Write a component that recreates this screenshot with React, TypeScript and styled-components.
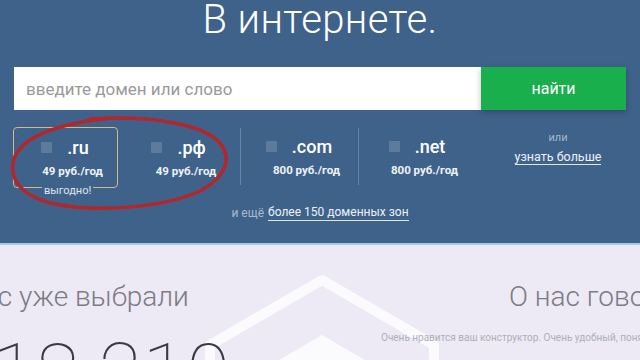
import React from 'react';
import styled, {createGlobalStyle} from 'styled-components';

const GlobalStyle = createGlobalStyle`
  html, body {
    margin: 0;
    padding: 0;
    width: 640px;
    height: 360px;
    overflow: hidden;
    background: #edeaf5;
    font-family: Roboto, 'Noto Sans', sans-serif;
  }
`;

interface IDomain {
  name: string;
  price: string;
  width: number;
  best?: boolean;
  divider?: boolean;
}

const DOMAINS: IDomain[] = [
  {name: '.ru', price: '49 руб./год', width: 105, best: true},
  {name: '.рф', price: '49 руб./год', width: 122},
  {name: '.com', price: '800 руб./год', width: 118, divider: true},
  {name: '.net', price: '800 руб./год', width: 118, divider: true}
];

const Hero = styled.section`
  position: relative;
  height: 243px;
  background: #3f628b;
  border-bottom: 2px solid #a9c7e6;
  display: flex;
  flex-direction: column;
  align-items: center;
`;

const Title = styled.h1`
  margin: 0;
  font-size: 40px;
  line-height: 40px;
  font-weight: 300;
  color: #fff;
  letter-spacing: 0.4px;
`;

const SearchBar = styled.form`
  margin-top: 27px;
  align-self: stretch;
  padding: 0 14px;
  display: flex;
  height: 43px;
`;

const SearchInput = styled.input`
  box-sizing: border-box;
  width: 467px;
  border: none;
  outline: none;
  padding: 0 12px;
  font-family: inherit;
  font-size: 17px;
  color: #333;
  background: #fff;
  &::placeholder {
    color: #9a9a9a;
  }
`;

const SearchButton = styled.button`
  width: 145px;
  border: none;
  background: #19af4c;
  color: #fff;
  font-family: inherit;
  font-size: 16px;
  box-shadow: 0 2px 6px rgba(0, 0, 0, 0.25);
`;

const DomainRow = styled.div`
  margin-top: 17px;
  align-self: stretch;
  padding-left: 13px;
  display: flex;
  height: 61px;
`;

const DomainCell = styled.label<{$width: number; $best?: boolean; $divider?: boolean}>`
  position: relative;
  box-sizing: border-box;
  width: ${(p) => p.$width}px;
  padding-left: 14px;
  display: flex;
  flex-direction: column;
  align-items: center;
  justify-content: center;
  gap: 6px;
  border: ${(p) => (p.$best ? '1.5px solid #d2b985' : 'none')};
  border-left: ${(p) => (p.$divider ? '1px solid #6685a9' : p.$best ? '1.5px solid #d2b985' : 'none')};
  border-radius: ${(p) => (p.$divider ? '0' : '4px')};
  ${(p) => (p.$divider ? 'margin: 1px 0 3px;' : '')}
`;

const NameLine = styled.div`
  display: flex;
  align-items: center;
  gap: 15px;
  margin-right: 15px;
`;

const Check = styled.span`
  width: 11px;
  height: 11px;
  border-radius: 1px;
  background: rgba(255, 255, 255, 0.16);
`;

const DomainName = styled.span`
  font-size: 18px;
  line-height: 20px;
  font-weight: 500;
  color: #fff;
`;

const Price = styled.span`
  font-size: 11.5px;
  font-weight: 700;
  color: #f1f3f6;
`;

const Badge = styled.span`
  position: absolute;
  left: 28px;
  bottom: -10px;
  padding: 0 2px;
  background: #3f628b;
  font-size: 11px;
  line-height: 13px;
  color: #dfe5ec;
`;

const MoreCell = styled.div`
  flex: 1;
  display: flex;
  flex-direction: column;
  align-items: center;
  padding-top: 4px;
  gap: 5px;
`;

const Muted = styled.span`
  font-size: 11px;
  color: #a6b8cd;
`;

const Link = styled.a<{$size?: number}>`
  font-size: ${(p) => p.$size || 12}px;
  color: #eef2f7;
  text-decoration: none;
  border-bottom: 1px solid #dfe6ee;
  line-height: 15px;
`;

const Zones = styled.div`
  margin-top: 17px;
  font-size: 12px;
  line-height: 16px;
  color: #a8bacf;
  display: flex;
  gap: 4px;
`;

const Circle = styled.svg`
  position: absolute;
  left: 0;
  top: 0;
  pointer-events: none;
`;

const Lower = styled.section`
  position: relative;
  height: 115px;
  overflow: hidden;
  display: flex;
  padding-top: 35px;
`;

const Emblem = styled.svg`
  position: absolute;
  left: 182px;
  top: 28px;
`;

const LeftCol = styled.div`
  position: relative;
  width: 418px;
  margin-left: -37px;
  flex-shrink: 0;
  white-space: nowrap;
`;

const RightCol = styled.div`
  position: relative;
  flex: 1;
  white-space: nowrap;
`;

const Heading = styled.h2<{$indent?: number}>`
  margin: 0 0 0 ${(p) => p.$indent || 0}px;
  font-size: 28px;
  line-height: 34px;
  font-weight: 300;
  color: #7b7b85;
`;

const Counter = styled.div`
  margin: 19px 0 0 29px;
  font-size: 80px;
  line-height: 80px;
  font-weight: 100;
  color: #3a3a44;
`;

const Quote = styled.p`
  margin: 18px 0 0;
  font-size: 10px;
  color: #aeaeb8;
`;

const App = () => {
  return (
    <>
      <GlobalStyle />
      <Hero>
        <Title>В интернете.</Title>
        <SearchBar>
          <SearchInput placeholder="введите домен или слово" />
          <SearchButton type="button">найти</SearchButton>
        </SearchBar>
        <DomainRow>
          {DOMAINS.map((d) => (
            <DomainCell key={d.name} $width={d.width} $best={d.best} $divider={d.divider}>
              <NameLine>
                <Check />
                <DomainName>{d.name}</DomainName>
              </NameLine>
              <Price>{d.price}</Price>
              {d.best && <Badge>выгодно!</Badge>}
            </DomainCell>
          ))}
          <MoreCell>
            <Muted>или</Muted>
            <Link $size={12.5}>узнать больше</Link>
          </MoreCell>
        </DomainRow>
        <Zones>
          <span>и ещё</span>
          <Link>более 150 доменных зон</Link>
        </Zones>
        <Circle width="240" height="220" viewBox="0 0 240 220">
          <path
            d="M 90 119 C 150 115, 202 124, 219 142 C 233 158, 226 177, 200 191 C 165 207, 100 213, 55 204 C 22 197, 8 179, 14 159 C 20 140, 50 124, 112 118"
            fill="none"
            stroke="#b3262a"
            strokeWidth="3.5"
            strokeLinecap="round"
          />
        </Circle>
      </Hero>
      <Lower>
        <Emblem width="280" height="100" viewBox="0 0 280 100">
          <path
            d="M 140 7 L 252 72 L 252 200 L 140 265 L 28 200 L 28 72 Z"
            fill="none"
            stroke="#fbfbfe"
            strokeWidth="10"
            strokeLinejoin="round"
          />
          <path d="M 140 62 L 205 100 L 75 100 Z" fill="#fbfbfe" />
        </Emblem>
        <LeftCol>
          <Heading>Нас уже выбрали</Heading>
          <Counter>18 210</Counter>
        </LeftCol>
        <RightCol>
          <Heading $indent={128}>О нас говорят</Heading>
          <Quote>Очень нравится ваш конструктор. Очень удобный, понятный и красивый.</Quote>
        </RightCol>
      </Lower>
    </>
  );
};

export default App;
